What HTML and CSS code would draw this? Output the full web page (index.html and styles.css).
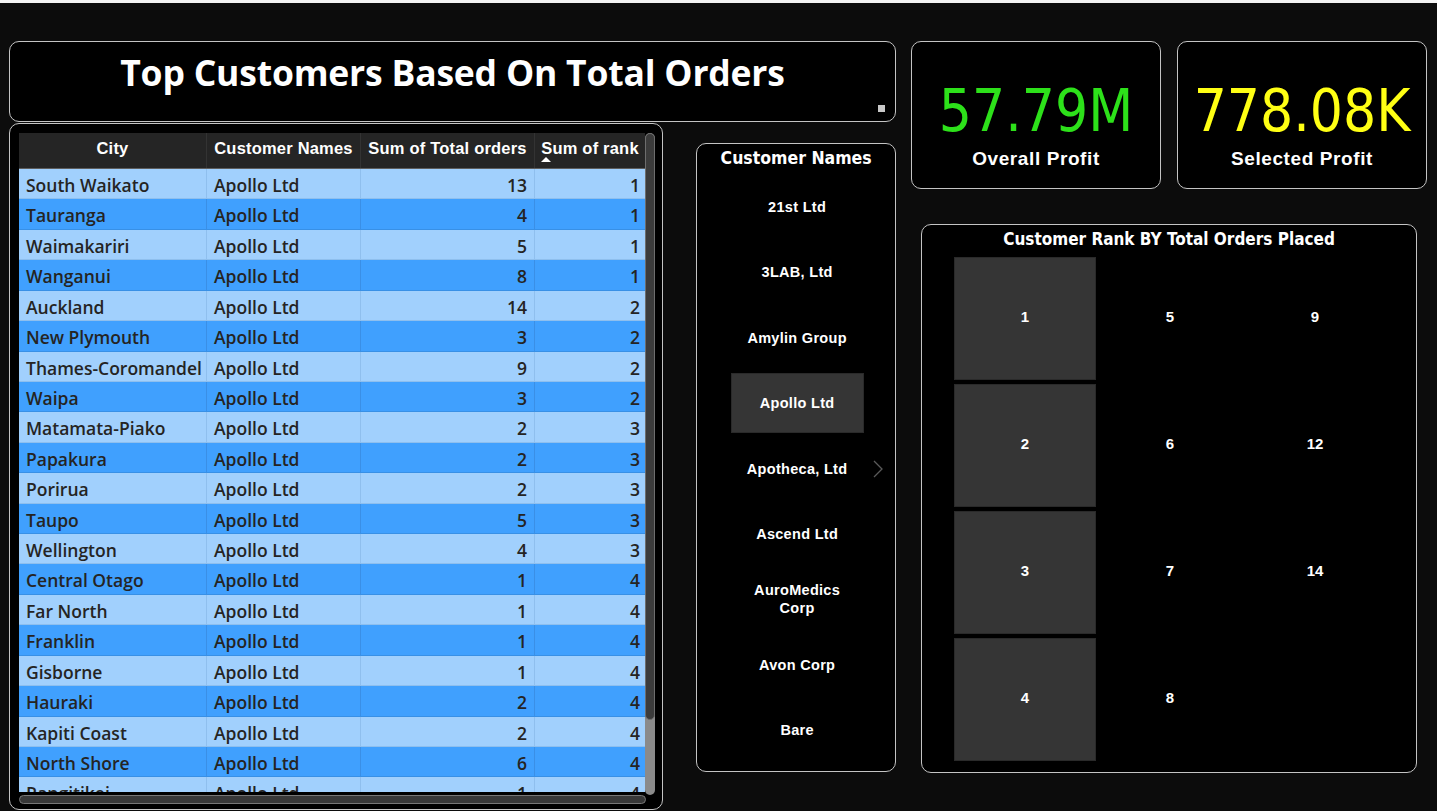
FILE: index.html
```html
<!DOCTYPE html>
<html>
<head>
<meta charset="utf-8">
<link rel="stylesheet" href="styles.css">
</head>
<body>
<div class="topstrip"></div>
<main class="dash">
  <section class="left">
    <div class="card title-card">
      <h1 class="title">Top Customers Based On Total Orders</h1>
      <span class="grip"></span>
    </div>
    <div class="left-row">
      <div class="card table-card">
        <div class="table-area">
          <div class="table-view">
            <div class="thead">
              <div class="th">City</div>
              <div class="th">Customer Names</div>
              <div class="th">Sum of Total orders</div>
              <div class="th sorted">Sum of rank<span class="sort-arrow"></span></div>
            </div>
            <div class="tbody">
              <div class="tr"><div class="td">South Waikato</div><div class="td">Apollo Ltd</div><div class="td num">13</div><div class="td num">1</div></div>
              <div class="tr"><div class="td">Tauranga</div><div class="td">Apollo Ltd</div><div class="td num">4</div><div class="td num">1</div></div>
              <div class="tr"><div class="td">Waimakariri</div><div class="td">Apollo Ltd</div><div class="td num">5</div><div class="td num">1</div></div>
              <div class="tr"><div class="td">Wanganui</div><div class="td">Apollo Ltd</div><div class="td num">8</div><div class="td num">1</div></div>
              <div class="tr"><div class="td">Auckland</div><div class="td">Apollo Ltd</div><div class="td num">14</div><div class="td num">2</div></div>
              <div class="tr"><div class="td">New Plymouth</div><div class="td">Apollo Ltd</div><div class="td num">3</div><div class="td num">2</div></div>
              <div class="tr"><div class="td">Thames-Coromandel</div><div class="td">Apollo Ltd</div><div class="td num">9</div><div class="td num">2</div></div>
              <div class="tr"><div class="td">Waipa</div><div class="td">Apollo Ltd</div><div class="td num">3</div><div class="td num">2</div></div>
              <div class="tr"><div class="td">Matamata-Piako</div><div class="td">Apollo Ltd</div><div class="td num">2</div><div class="td num">3</div></div>
              <div class="tr"><div class="td">Papakura</div><div class="td">Apollo Ltd</div><div class="td num">2</div><div class="td num">3</div></div>
              <div class="tr"><div class="td">Porirua</div><div class="td">Apollo Ltd</div><div class="td num">2</div><div class="td num">3</div></div>
              <div class="tr"><div class="td">Taupo</div><div class="td">Apollo Ltd</div><div class="td num">5</div><div class="td num">3</div></div>
              <div class="tr"><div class="td">Wellington</div><div class="td">Apollo Ltd</div><div class="td num">4</div><div class="td num">3</div></div>
              <div class="tr"><div class="td">Central Otago</div><div class="td">Apollo Ltd</div><div class="td num">1</div><div class="td num">4</div></div>
              <div class="tr"><div class="td">Far North</div><div class="td">Apollo Ltd</div><div class="td num">1</div><div class="td num">4</div></div>
              <div class="tr"><div class="td">Franklin</div><div class="td">Apollo Ltd</div><div class="td num">1</div><div class="td num">4</div></div>
              <div class="tr"><div class="td">Gisborne</div><div class="td">Apollo Ltd</div><div class="td num">1</div><div class="td num">4</div></div>
              <div class="tr"><div class="td">Hauraki</div><div class="td">Apollo Ltd</div><div class="td num">2</div><div class="td num">4</div></div>
              <div class="tr"><div class="td">Kapiti Coast</div><div class="td">Apollo Ltd</div><div class="td num">2</div><div class="td num">4</div></div>
              <div class="tr"><div class="td">North Shore</div><div class="td">Apollo Ltd</div><div class="td num">6</div><div class="td num">4</div></div>
              <div class="tr"><div class="td">Rangitikei</div><div class="td">Apollo Ltd</div><div class="td num">1</div><div class="td num">4</div></div>
            </div>
          </div>
          <div class="vscroll"><div class="vthumb"></div></div>
        </div>
        <div class="hscroll"></div>
      </div>

      <div class="card slicer">
        <div class="slicer-title">Customer Names</div>
        <div class="slicer-list">
          <div class="slicer-item">21st Ltd</div>
          <div class="slicer-item">3LAB, Ltd</div>
          <div class="slicer-item">Amylin Group</div>
          <div class="slicer-item selected">Apollo Ltd</div>
          <div class="slicer-item">Apotheca, Ltd</div>
          <div class="slicer-item">Ascend Ltd</div>
          <div class="slicer-item">AuroMedics Corp</div>
          <div class="slicer-item">Avon Corp</div>
          <div class="slicer-item">Bare</div>
        </div>
        <svg class="chevron" width="10" height="18" viewBox="0 0 10 18"><path d="M1 1 L9 9 L1 17" fill="none" stroke="#5a5a5a" stroke-width="1.3"/></svg>
      </div>
    </div>
  </section>

  <section class="right">
    <div class="kpis">
      <div class="card kpi">
        <div class="kpi-value green">57.79M</div>
        <div class="kpi-label">Overall Profit</div>
      </div>
      <div class="card kpi">
        <div class="kpi-value yellow">778.08K</div>
        <div class="kpi-label">Selected Profit</div>
      </div>
    </div>
    <div class="card rank">
      <div class="rank-title">Customer Rank BY Total Orders Placed</div>
      <div class="rank-grid">
        <div class="tile filled">1</div>
        <div class="tile filled">2</div>
        <div class="tile filled">3</div>
        <div class="tile filled">4</div>
        <div class="tile">5</div>
        <div class="tile">6</div>
        <div class="tile">7</div>
        <div class="tile">8</div>
        <div class="tile">9</div>
        <div class="tile">12</div>
        <div class="tile">14</div>
      </div>
    </div>
  </section>
</main>
</body>
</html>
```

FILE: styles.css
```css
* { box-sizing: border-box; }

html, body {
  margin: 0;
  padding: 0;
  background: #0c0c0c;
  height: 811px;
  overflow: hidden;
}

.topstrip {
  height: 3px;
  background: #f4f4f4;
}

.dash {
  display: flex;
  padding: 38px 0 0 9px;
}

.card {
  background: #000;
  border: 1px solid #c4c4c4;
  border-radius: 10px;
  position: relative;
}

/* LEFT */
.left {
  width: 887px;
  display: flex;
  flex-direction: column;
}

.title-card {
  width: 887px;
  height: 81px;
  display: flex;
  justify-content: center;
}

.title {
  margin: 0;
  padding-top: 8px;
  font-family: "Open Sans", "Noto Sans", sans-serif;
  font-weight: 700;
  font-size: 35.5px;
  line-height: 44px;
  color: #fff;
  letter-spacing: -0.2px;
}

.grip {
  position: absolute;
  right: 10px;
  bottom: 9px;
  width: 7px;
  height: 7px;
  background: #c8c8c8;
}

.left-row {
  display: flex;
  margin-top: 1px;
  align-items: flex-start;
}

.table-card {
  width: 655px;
  height: 687px;
  padding: 9px 0 0 9px;
  overflow: hidden;
}

.table-area {
  display: flex;
  height: 662px;
}

.table-view {
  width: 626px;
  height: 659px;
  overflow: hidden;
}

.thead {
  display: grid;
  grid-template-columns: 188px 154px 174px 110px;
  height: 36px;
  background: #252525;
  border-bottom: 1px solid #5e5e5e;
}

.th {
  position: relative;
  font-family: "Liberation Sans", Arial, sans-serif;
  font-weight: 700;
  font-size: 16.5px;
  letter-spacing: 0.2px;
  color: #fff;
  text-align: center;
  line-height: 30px;
  white-space: nowrap;
  border-right: 1px solid #333;
}

.th:last-child { border-right: none; }

.sort-arrow {
  position: absolute;
  left: 6px;
  top: 24px;
  width: 0;
  height: 0;
  border-left: 5px solid transparent;
  border-right: 5px solid transparent;
  border-bottom: 5px solid #fff;
}

.tr {
  display: grid;
  grid-template-columns: 188px 154px 174px 110px;
  height: 30.43px;
  background: #a1d0fd;
  border-bottom: 1px solid #8ebfee;
}

.tr:nth-child(even) {
  background: #40a0fe;
  border-bottom-color: #3890e6;
}

.td {
  font-family: "Open Sans", "Noto Sans", sans-serif;
  font-weight: 600;
  font-size: 17.5px;
  color: #252423;
  line-height: 32px;
  padding: 0 7px;
  white-space: nowrap;
  overflow: hidden;
  border-right: 1px solid #8fbfee;
}

.tr:nth-child(even) .td { border-right-color: #3a8fe6; }
.td:last-child { border-right: none; }

.td.num {
  text-align: right;
}

.td.num:last-child { padding-right: 5px; }

.vscroll {
  width: 10px;
  height: 662px;
  background: #8a8a8a;
  border-radius: 5px;
  overflow: hidden;
}

.vthumb {
  height: 587px;
  background: #3b3b3b;
  border-radius: 5px;
  border: 1px solid #6d6d6d;
}

.hscroll {
  width: 627px;
  height: 9px;
  background: #383838;
  border: 1px solid #777;
  border-radius: 5px;
}

/* Slicer */
.slicer {
  width: 200px;
  height: 629px;
  margin: 20px 0 0 33px;
  display: flex;
  flex-direction: column;
  align-items: center;
}

.slicer-title {
  height: 33px;
  font-family: "DejaVu Sans Condensed", "DejaVu Sans", sans-serif;
  font-stretch: condensed;
  font-weight: 700;
  font-size: 17.5px;
  line-height: 28px;
  color: #fff;
  text-align: center;
}

.slicer-list {
  display: flex;
  flex-direction: column;
  gap: 5.4px;
  padding-left: 2px;
}

.slicer-item {
  width: 133px;
  height: 60px;
  display: flex;
  align-items: center;
  justify-content: center;
  text-align: center;
  padding: 0 14px;
  font-family: "Liberation Sans", Arial, sans-serif;
  font-weight: 700;
  font-size: 14.5px;
  letter-spacing: 0.3px;
  line-height: 18px;
  color: #fff;
}

.slicer-item.selected {
  background: #353535;
  border: 1px solid #2a2a2a;
}

.chevron {
  position: absolute;
  left: 176px;
  top: 316px;
}

/* RIGHT */
.right {
  margin-left: 15px;
  width: 516px;
  display: flex;
  flex-direction: column;
}

.kpis {
  display: flex;
  gap: 16px;
}

.kpi {
  width: 250px;
  height: 148px;
  display: flex;
  flex-direction: column;
  align-items: center;
}

.kpi-value {
  margin-top: 36px;
  font-family: "DejaVu Sans Condensed", "DejaVu Sans", sans-serif;
  font-stretch: condensed;
  font-size: 58px;
  line-height: 66px;
}

.green { color: #2de11a; }
.yellow { color: #ffff14; }

.kpi-label {
  margin-top: 4px;
  font-family: "Liberation Sans", Arial, sans-serif;
  font-weight: 700;
  font-size: 19px;
  letter-spacing: 0.6px;
  line-height: 22px;
  color: #fff;
}

.rank {
  margin: 35px 0 0 10px;
  width: 496px;
  height: 549px;
  padding-left: 32px;
}

.rank-title {
  height: 32px;
  margin-left: -32px;
  font-family: "DejaVu Sans Condensed", "DejaVu Sans", sans-serif;
  font-stretch: condensed;
  font-weight: 700;
  font-size: 17px;
  line-height: 28px;
  color: #fff;
  text-align: center;
}

.rank-grid {
  display: grid;
  grid-template-columns: repeat(3, 142px);
  grid-template-rows: repeat(4, 123px);
  grid-auto-flow: column;
  column-gap: 3px;
  row-gap: 4px;
}

.tile {
  display: flex;
  align-items: center;
  justify-content: center;
  padding-bottom: 4px;
  font-family: "Liberation Sans", Arial, sans-serif;
  font-weight: 700;
  font-size: 15px;
  color: #fff;
}

.tile.filled {
  background: #353535;
  border: 1px solid #2a2a2a;
}
```
